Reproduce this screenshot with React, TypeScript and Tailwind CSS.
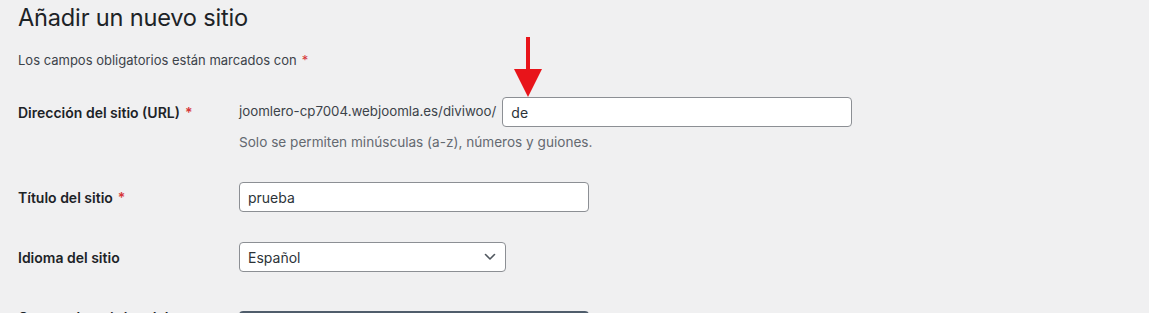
import React from 'react';

// Formulario "Añadir un nuevo sitio" (multisite admin)
function Req() {
  return <span className="ml-[5px] text-[#d63638]">*</span>;
}

export default function App() {
  return (
    <div
      className="relative w-[1149px] h-[313px] overflow-hidden bg-[#f0f0f1] pl-[18px] text-[#1d2327]"
      style={{ fontFamily: 'Inter, "Noto Sans", sans-serif' }}
    >
      <h1 className="mt-[3px] text-[23.6px] leading-[30px] font-normal tracking-[-0.2px]">
        Añadir un nuevo sitio
      </h1>
      <p className="mt-[17px] text-[13px] leading-[20px] text-[#3c434a]">
        Los campos obligatorios están marcados con<Req />
      </p>

      {/* Dirección */}
      <div className="mt-[27px] flex">
        <div className="w-[221px] h-[30px] flex items-center text-[14px] font-semibold">
          <span>Dirección del sitio (URL)</span>
          <Req />
        </div>
        <div>
          <div className="flex items-center h-[30px] text-[13.3px] text-[#3c434a]">
            <span>joomlero-cp7004.webjoomla.es/diviwoo/</span>
            <div className="ml-[6px] w-[350px] h-[30px] flex items-center rounded-[4px] border border-[#8c8f94] bg-white px-2 text-[14px] text-[#2c3338]">
              de
            </div>
          </div>
          <p className="mt-[5px] text-[13.6px] leading-[20px] text-[#646970]">
            Solo se permiten minúsculas (a-z), números y guiones.
          </p>
        </div>
      </div>

      {/* Título */}
      <div className="mt-[30px] flex">
        <div className="w-[221px] h-[30px] flex items-center text-[14px] font-semibold">
          <span>Título del sitio</span>
          <Req />
        </div>
        <div className="w-[350px] h-[30px] flex items-center rounded-[4px] border border-[#8c8f94] bg-white px-2 text-[14px] text-[#2c3338]">
          prueba
        </div>
      </div>

      {/* Idioma */}
      <div className="mt-[30px] flex">
        <div className="w-[221px] h-[30px] flex items-center text-[14px] font-semibold">
          Idioma del sitio
        </div>
        <div className="w-[267px] h-[30px] flex items-center justify-between rounded-[4px] border border-[#8c8f94] bg-white pl-2 pr-[9px] text-[14px] text-[#2c3338]">
          <span>Español</span>
          <svg width="12" height="8" viewBox="0 0 12 8" fill="none">
            <path d="M1.5 1.5 6 6l4.5-4.5" stroke="#50575e" strokeWidth="1.6" strokeLinecap="round" strokeLinejoin="round" />
          </svg>
        </div>
      </div>

      {/* Correo (cortado) */}
      <div className="mt-[39px] flex">
        <div className="w-[221px] text-[14px] font-semibold leading-[20px] -mt-[3px]">
          Correo electrónico del administrador
        </div>
        <div className="w-[350px] h-[30px] rounded-[4px] bg-[#4f5d6b]" />
      </div>

      {/* flecha roja */}
      <svg
        className="absolute left-[512px] top-[37px]"
        width="32"
        height="61"
        viewBox="0 0 32 61"
      >
        <rect x="14" y="0" width="4" height="34" fill="#e8141a" />
        <polygon points="2,32 30,32 16,60" fill="#e8141a" />
      </svg>
    </div>
  );
}
